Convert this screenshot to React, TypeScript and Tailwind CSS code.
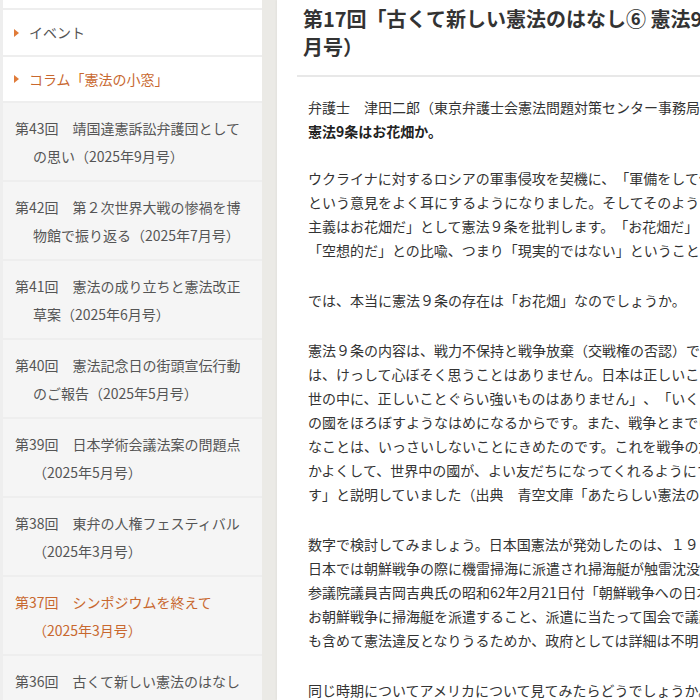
import React from "react";

const items: { l1: string; l2: string; active?: boolean }[] = [
  { l1: "第43回　靖国違憲訴訟弁護団として", l2: "の思い（2025年9月号）" },
  { l1: "第42回　第２次世界大戦の惨禍を博", l2: "物館で振り返る（2025年7月号）" },
  { l1: "第41回　憲法の成り立ちと憲法改正", l2: "草案（2025年6月号）" },
  { l1: "第40回　憲法記念日の街頭宣伝行動", l2: "のご報告（2025年5月号）" },
  { l1: "第39回　日本学術会議法案の問題点", l2: "（2025年5月号）" },
  { l1: "第38回　東弁の人権フェスティバル", l2: "（2025年3月号）" },
  { l1: "第37回　シンポジウムを終えて", l2: "（2025年3月号）", active: true },
  { l1: "第36回　古くて新しい憲法のはなし", l2: "⑥　憲法9条はお花畑か（2022年7月号）" },
];

const paragraphs: string[][] = [
  [
    "ウクライナに対するロシアの軍事侵攻を契機に、「軍備をして侵略に備えるべきだ」",
    "という意見をよく耳にするようになりました。そしてそのような人々は「平和",
    "主義はお花畑だ」として憲法９条を批判します。「お花畑だ」とは",
    "「空想的だ」との比喩、つまり「現実的ではない」ということです。",
  ],
  ["では、本当に憲法９条の存在は「お花畑」なのでしょうか。"],
  [
    "憲法９条の内容は、戦力不保持と戦争放棄（交戦権の否認）です。しかしみなさん",
    "は、けっして心ぼそく思うことはありません。日本は正しいことを、ほかの國より",
    "世の中に、正しいことぐらい強いものはありません」、「いくさをしかけることは、",
    "の國をほろぼすようなはめになるからです。また、戦争とまでゆかずとも、國の",
    "なことは、いっさいしないことにきめたのです。これを戦争の放棄というのです。",
    "かよくして、世界中の國が、よい友だちになってくれるようにすれば、日本の國",
    "す」と説明していました（出典　青空文庫「あたらしい憲法のはなし」）。",
  ],
  [
    "数字で検討してみましょう。日本国憲法が発効したのは、１９４７年です。その後、",
    "日本では朝鮮戦争の際に機雷掃海に派遣され掃海艇が触雷沈没し死者が出ています",
    "参議院議員吉岡吉典氏の昭和62年2月21日付「朝鮮戦争への日本の協力に関する質問",
    "お朝鮮戦争に掃海艇を派遣すること、派遣に当たって国会で議論されなかったこと",
    "も含めて憲法違反となりうるためか、政府としては詳細は不明としています。",
  ],
  ["同じ時期についてアメリカについて見てみたらどうでしょうか。"],
];

export default function App() {
  return (
    <div className="w-[700px] h-[700px] overflow-hidden flex items-start bg-[#ecebe7] [text-spacing-trim:space-all] font-['Noto_Sans_CJK_JP','Noto_Sans',sans-serif]">
      {/* Sidebar */}
      <div className="w-[262px] shrink-0 pl-[3px] flex flex-col gap-[2px] bg-[#eeeeee]">
        <div className="h-[8px] shrink-0 bg-white" />
        <div className="h-[45px] shrink-0 bg-white flex items-center pl-[11px]">
          <span className="w-0 h-0 border-y-[4px] border-y-transparent border-l-[5px] border-l-[#e07b39]" />
          <span className="ml-[10px] text-[14px] text-[#555555]">イベント</span>
        </div>
        <div className="h-[44px] shrink-0 bg-white flex items-center pl-[11px]">
          <span className="w-0 h-0 border-y-[4px] border-y-transparent border-l-[5px] border-l-[#e07b39]" />
          <span className="ml-[10px] text-[14px] text-[#c8682f]">コラム「憲法の小窓」</span>
        </div>
        {items.map((it, i) => (
          <div
            key={i}
            className={`shrink-0 bg-[#f5f5f5] pt-[11px] pb-[10px] text-[14px] leading-[28px] whitespace-nowrap ${
              it.active ? "text-[#c8682f]" : "text-[#555555]"
            }`}
          >
            <div className="pl-[12px]">{it.l1}</div>
            <div className="pl-[30px]">{it.l2}</div>
          </div>
        ))}
      </div>
      {/* Gap band */}
      <div className="w-[15px] h-[700px] shrink-0 bg-[#ebeae6]" />
      {/* Main */}
      <div className="flex-1 min-w-0 h-[700px] bg-white shadow-[-1px_0_2px_rgba(0,0,0,0.04)] overflow-hidden">
        <div className="pl-[26px] pt-[5px] text-[20px] leading-[28px] font-bold text-[#333333] whitespace-nowrap">
          <div>第17回「古くて新しい憲法のはなし⑥ 憲法9条はお花畑か」（2022年7</div>
          <div>月号）</div>
        </div>
        <div className="ml-[20px] mt-[14px] h-[2px] bg-[#e8e8e8]" />
        <div className="pl-[31px] pt-[18px] text-[14px] leading-[24px] text-[#333333] whitespace-nowrap">
          <div className="mb-[23px]">
            <div>弁護士　津田二郎（東京弁護士会憲法問題対策センター事務局長）</div>
            <div className="font-bold text-[#222222]">憲法9条はお花畑か。</div>
          </div>
          {paragraphs.map((p, i) => (
            <div key={i} className="mb-[26px]">
              {p.map((line, j) => (
                <div key={j}>{line}</div>
              ))}
            </div>
          ))}
        </div>
      </div>
    </div>
  );
}
